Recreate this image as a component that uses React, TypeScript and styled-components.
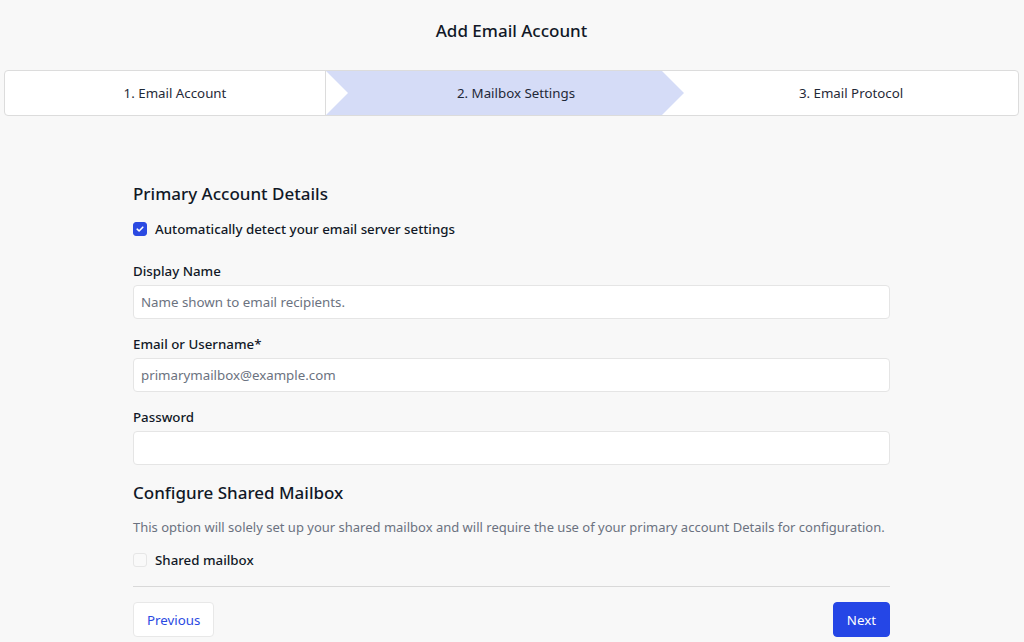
import * as React from "react"
import styled, { createGlobalStyle } from "styled-components"

const GlobalStyle = createGlobalStyle`
  html, body {
    margin: 0;
    padding: 0;
    background: #f8f8f8;
  }
  body {
    font-family: "Noto Sans", "Open Sans", sans-serif;
    color: #111827;
  }
  * {
    box-sizing: border-box;
  }
`

const Page = styled.div`
  padding: 0 5px 0 4px;
  min-height: 642px;
`

const Title = styled.h1`
  margin: 0;
  height: 70px;
  display: flex;
  align-items: center;
  justify-content: center;
  padding-bottom: 10px;
  font-size: 17px;
  font-weight: 500;
  color: #111827;
`

const Stepper = styled.div`
  display: flex;
  height: 46px;
  background: #fff;
  border: 1px solid #dcdcdc;
  border-radius: 4px;
  overflow: hidden;
`

const Step = styled.div<{ $active?: boolean; $width?: number; $shift?: number }>`
  flex: ${p => (p.$width ? `0 0 ${p.$width}px` : "1")};
  display: flex;
  align-items: center;
  justify-content: center;
  padding-left: ${p => p.$shift || 0}px;
  padding-bottom: 1px;
  font-size: 13.3px;
  color: #1f2937;
  background: ${p => (p.$active ? "#d5dcf7" : "transparent")};
  clip-path: ${p =>
    p.$active
      ? "polygon(0 0, calc(100% - 22px) 0, 100% 50%, calc(100% - 22px) 100%, 0 100%, 22px 50%)"
      : "none"};
`

const FirstStep = styled(Step)`
  border-right: 1px solid #dcdcdc;
`

const Form = styled.div`
  width: 757px;
  margin: 0 auto;
  padding-top: 66px;
  display: flex;
  flex-direction: column;
`

const SectionTitle = styled.h2<{ $top?: number }>`
  margin: ${p => p.$top || 0}px 0 0;
  font-size: 17px;
  font-weight: 500;
  line-height: 24px;
  color: #111827;
`

const CheckRow = styled.label<{ $top: number }>`
  display: flex;
  align-items: center;
  gap: 8px;
  margin-top: ${p => p.$top}px;
  font-size: 13.3px;
  font-weight: 500;
  line-height: 20px;
  color: #111827;
`

const Box = styled.span<{ $checked?: boolean }>`
  width: 14px;
  height: 14px;
  border-radius: 3px;
  display: flex;
  align-items: center;
  justify-content: center;
  background: ${p => (p.$checked ? "#2b4ae2" : "#f9f9f9")};
  border: 1px solid ${p => (p.$checked ? "#2b4ae2" : "#e6e6e6")};
`

const Field = styled.div<{ $top: number }>`
  display: flex;
  flex-direction: column;
  gap: 4px;
  margin-top: ${p => p.$top}px;
`

const Label = styled.div`
  font-size: 13.3px;
  font-weight: 500;
  line-height: 20px;
  color: #111827;
`

const Input = styled.input`
  height: 34px;
  width: 100%;
  border: 1px solid #e5e5e5;
  border-radius: 4px;
  background: #fff;
  padding: 0 7px;
  font-family: "Noto Sans", "Open Sans", sans-serif;
  font-size: 13.3px;
  color: #111827;
  outline: none;
  &::placeholder {
    color: #6b7280;
  }
`

const Help = styled.p`
  margin: 12px 0 0;
  font-size: 13px;
  line-height: 20px;
  white-space: nowrap;
  color: #6b7280;
`

const Divider = styled.hr`
  margin: 16px 0 0;
  border: 0;
  border-top: 1px solid #d9d9d9;
`

const Actions = styled.div`
  display: flex;
  justify-content: space-between;
  margin-top: 15px;
`

const Button = styled.button<{ $primary?: boolean }>`
  height: 35px;
  padding: 0 13px;
  border-radius: 4px;
  font-family: "Noto Sans", "Open Sans", sans-serif;
  font-size: 13.3px;
  cursor: pointer;
  border: 1px solid ${p => (p.$primary ? "#2546e6" : "#e8e8e8")};
  background: ${p => (p.$primary ? "#2546e6" : "#fff")};
  color: ${p => (p.$primary ? "#fff" : "#2b4ae2")};
`

const Tick = () => (
  <svg width="10" height="10" viewBox="0 0 10 10" fill="none">
    <path d="M2.2 5.2 L4.1 7 L7.8 3.2" stroke="#fff" strokeWidth="1.6" strokeLinecap="round" strokeLinejoin="round" />
  </svg>
)

export default function App() {
  return (
    <Page>
      <GlobalStyle />
      <Title>Add Email Account</Title>
      <Stepper>
        <FirstStep $width={321} $shift={20}>1. Email Account</FirstStep>
        <Step $active $width={358} $shift={22}>2. Mailbox Settings</Step>
        <Step>3. Email Protocol</Step>
      </Stepper>
      <Form>
        <SectionTitle>Primary Account Details</SectionTitle>
        <CheckRow $top={13}>
          <Box $checked>
            <Tick />
          </Box>
          Automatically detect your email server settings
        </CheckRow>
        <Field $top={22}>
          <Label>Display Name</Label>
          <Input placeholder="Name shown to email recipients." />
        </Field>
        <Field $top={15}>
          <Label>Email or Username*</Label>
          <Input placeholder="primarymailbox@example.com" />
        </Field>
        <Field $top={15}>
          <Label>Password</Label>
          <Input type="password" />
        </Field>
        <SectionTitle $top={16}>Configure Shared Mailbox</SectionTitle>
        <Help>
          This option will solely set up your shared mailbox and will require the use of your primary account Details for configuration.
        </Help>
        <CheckRow $top={13}>
          <Box />
          Shared mailbox
        </CheckRow>
        <Divider />
        <Actions>
          <Button>Previous</Button>
          <Button $primary>Next</Button>
        </Actions>
      </Form>
    </Page>
  )
}
